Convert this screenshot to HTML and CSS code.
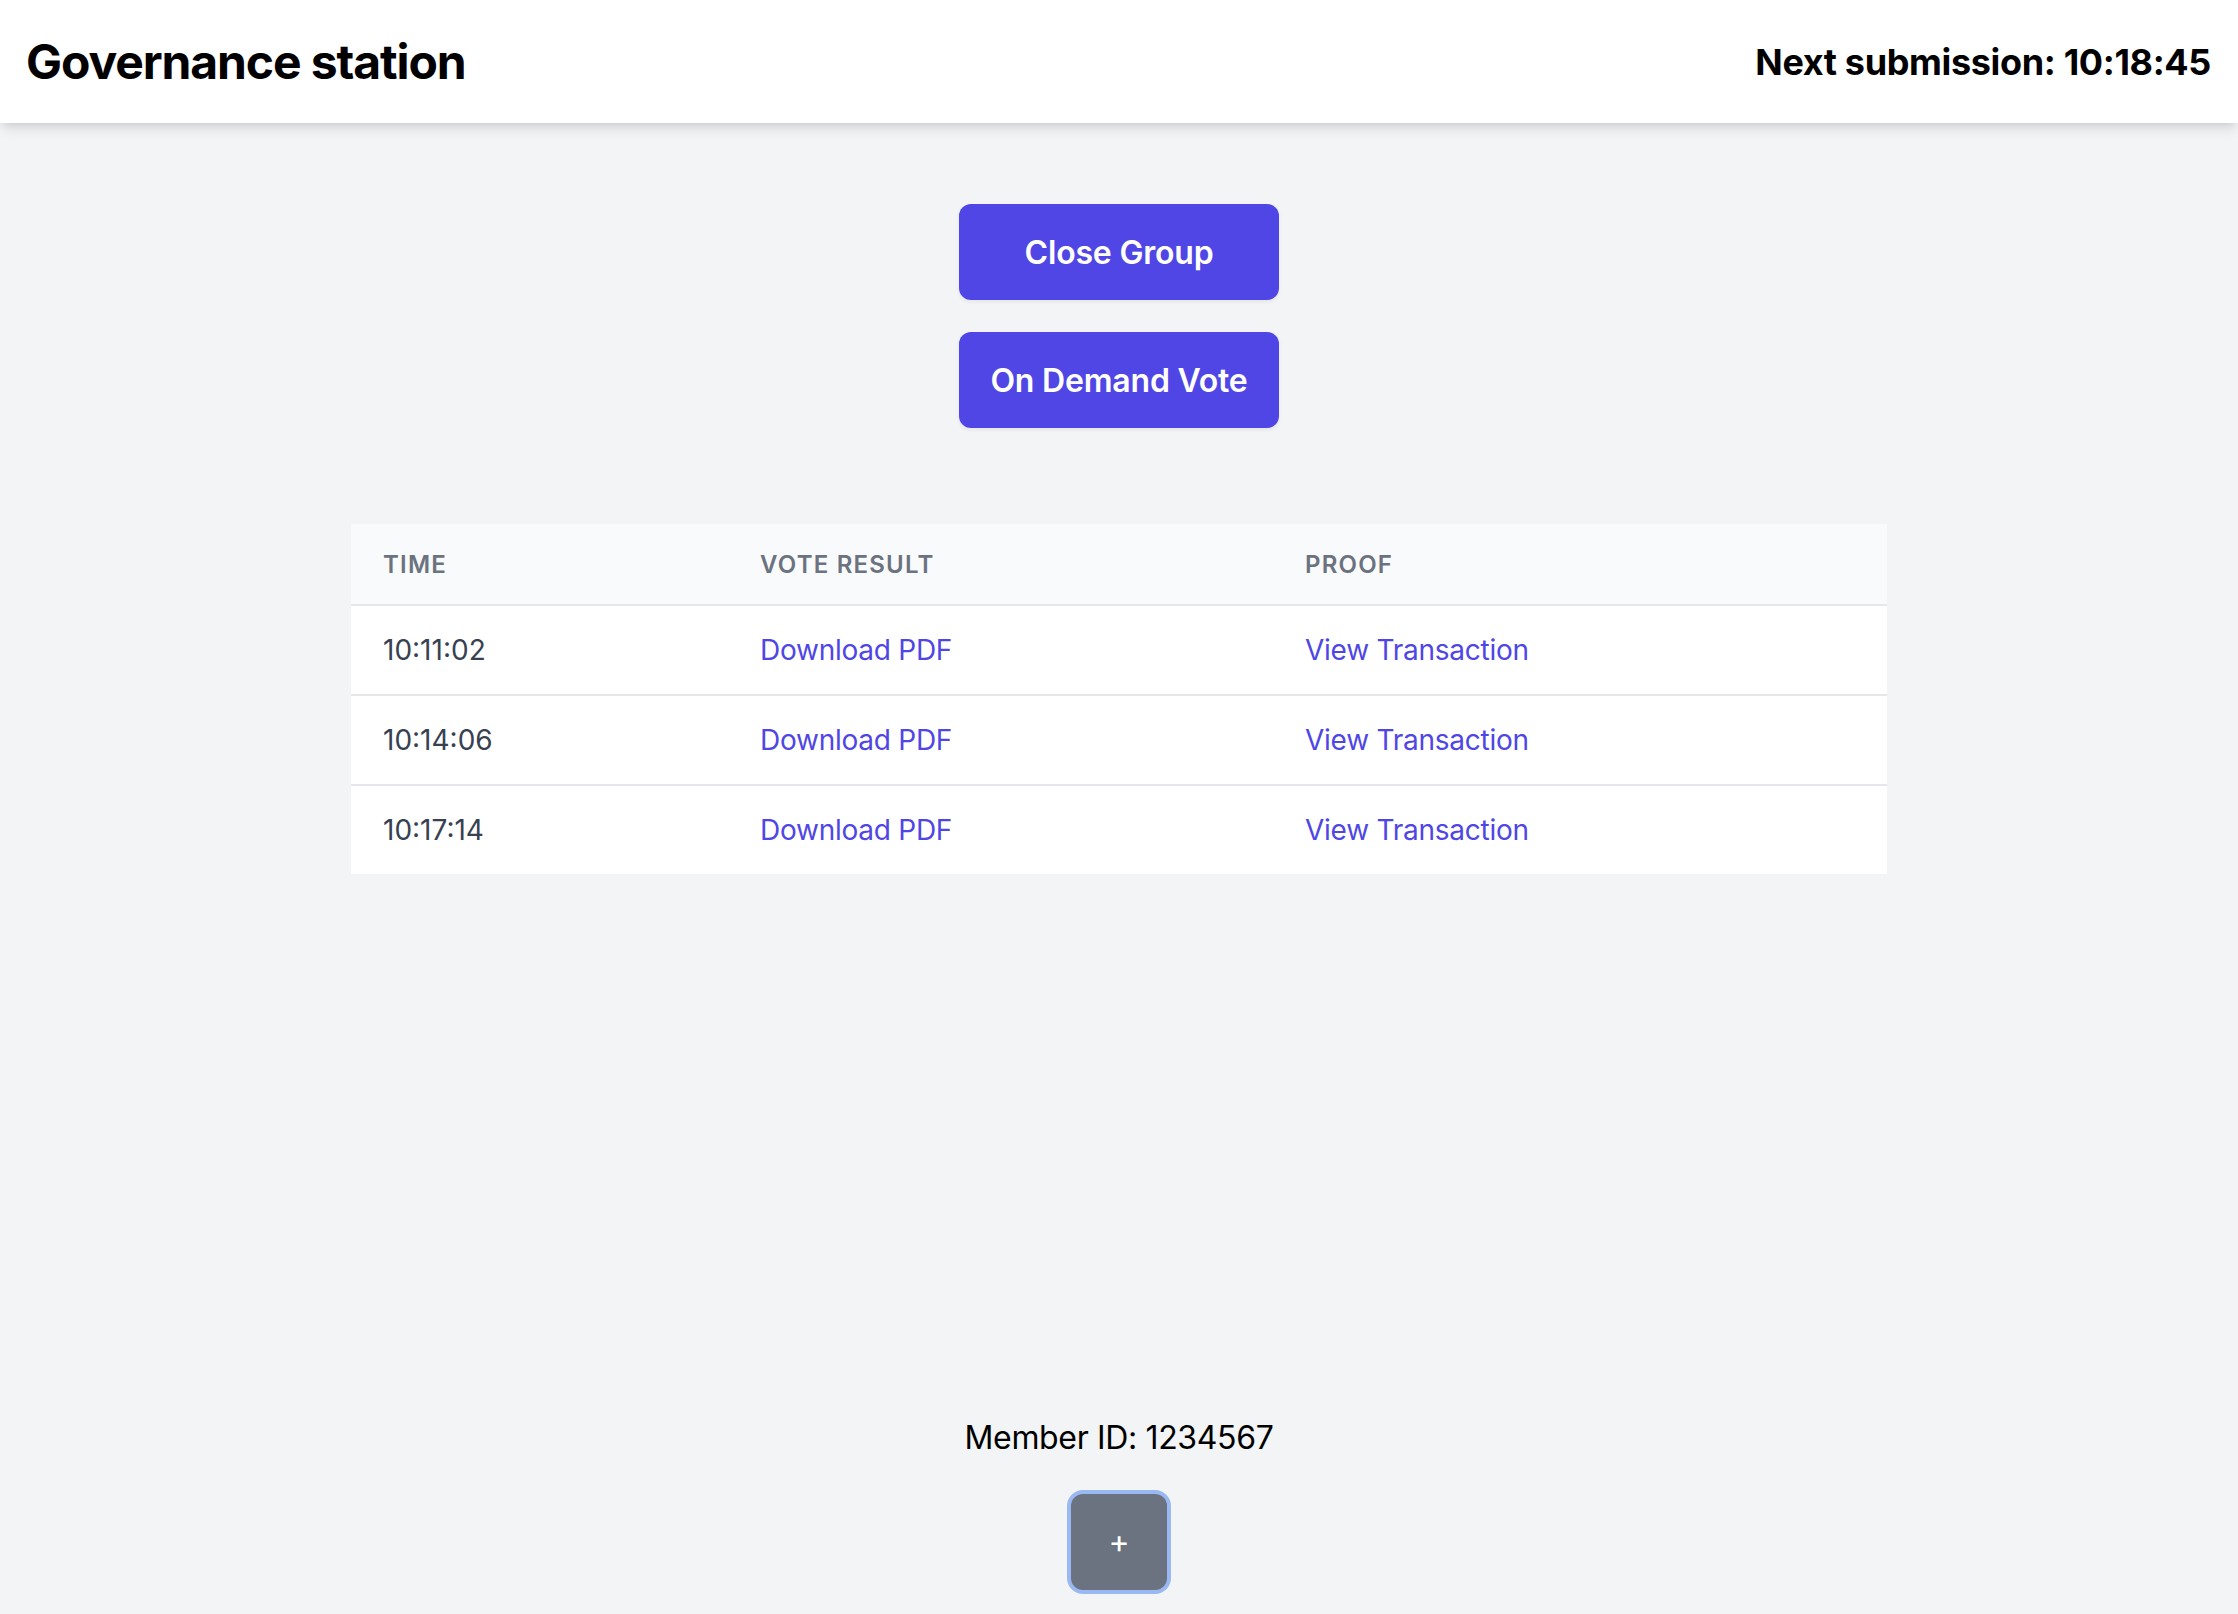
FILE: index.html
```html
<!DOCTYPE html>
<html lang="en">
<head>
<meta charset="utf-8">
<title>Governance station</title>
<link rel="stylesheet" href="styles.css">
</head>
<body>
<div class="page">
  <header class="topbar">
    <h1 class="title">Governance station</h1>
    <div class="next">Next submission: 10:18:45</div>
  </header>

  <main class="main">
    <div class="actions">
      <button class="btn">Close Group</button>
      <button class="btn">On Demand Vote</button>
    </div>

    <table class="votes">
      <colgroup>
        <col class="c1"><col class="c2"><col class="c3">
      </colgroup>
      <thead>
        <tr><th>Time</th><th>Vote Result</th><th>Proof</th></tr>
      </thead>
      <tbody>
        <tr><td class="time">10:11:02</td><td><a href="#">Download PDF</a></td><td><a href="#">View Transaction</a></td></tr>
        <tr><td class="time">10:14:06</td><td><a href="#">Download PDF</a></td><td><a href="#">View Transaction</a></td></tr>
        <tr><td class="time">10:17:14</td><td><a href="#">Download PDF</a></td><td><a href="#">View Transaction</a></td></tr>
      </tbody>
    </table>
  </main>

  <footer class="footer">
    <div class="member">Member ID: 1234567</div>
    <button class="plus">+</button>
  </footer>
</div>
</body>
</html>
```

FILE: styles.css
```css
* { box-sizing: border-box; }

html, body {
  margin: 0;
  padding: 0;
}

body {
  background: #f3f4f6;
  font-family: Inter, "Noto Sans", "Liberation Sans", sans-serif;
  color: #000;
}

.page {
  min-height: 100vh;
  display: flex;
  flex-direction: column;
}

.topbar {
  height: 123px;
  background: #fff;
  display: flex;
  align-items: center;
  justify-content: space-between;
  padding: 0 27px 0 26px;
  box-shadow: 0 8px 12px -2px rgba(0,0,0,0.10), 0 4px 8px -4px rgba(0,0,0,0.10);
  position: relative;
  z-index: 1;
}

.title {
  margin: 0;
  font-size: 48px;
  line-height: 64px;
  font-weight: 700;
  letter-spacing: -1.1px;
}

.next {
  font-size: 36px;
  line-height: 56px;
  font-weight: 700;
  letter-spacing: -0.35px;
}

.main {
  flex: 1;
  display: flex;
  flex-direction: column;
  align-items: center;
  padding-top: 81px;
}

.actions {
  display: flex;
  flex-direction: column;
  align-items: center;
  gap: 32px;
}

.btn {
  width: 320px;
  height: 96px;
  border: none;
  border-radius: 12px;
  background: #4f46e5;
  color: #fff;
  font-family: inherit;
  font-size: 32px;
  line-height: 48px;
  font-weight: 600;
  letter-spacing: -0.2px;
  padding-top: 2px;
  box-shadow: 0 2px 4px rgba(0,0,0,0.06);
  cursor: pointer;
}

.votes {
  margin-top: 96px;
  width: 1536px;
  table-layout: fixed;
  border-collapse: collapse;
  background: #fff;
}

.c1 { width: 377px; }
.c2 { width: 545px; }
.c3 { width: 614px; }

.votes thead tr {
  background: #f9fafb;
}

.votes th {
  text-align: left;
  padding: 25px 32px 23px;
  font-size: 24px;
  line-height: 32px;
  font-weight: 600;
  color: #6b7280;
  text-transform: uppercase;
  letter-spacing: 1.2px;
}

.votes td {
  padding: 24px 32px;
  font-size: 28px;
  line-height: 40px;
  border-top: 2px solid #e5e7eb;
}

.votes td.time {
  color: #374151;
}

.votes a {
  color: #4f46e5;
  text-decoration: none;
  letter-spacing: -0.25px;
}

.footer {
  display: flex;
  flex-direction: column;
  align-items: center;
  padding-bottom: 24px;
}

.member {
  font-size: 32px;
  line-height: 48px;
  color: #000;
  letter-spacing: -0.35px;
}

.plus {
  margin-top: 32px;
  width: 96px;
  height: 96px;
  border: none;
  border-radius: 12px;
  background: #6b7280;
  color: #fff;
  font-family: inherit;
  font-size: 32px;
  line-height: 1;
  box-shadow: 0 0 0 4px #9ab8f2;
  display: flex;
  align-items: center;
  justify-content: center;
  padding: 0;
}
```
